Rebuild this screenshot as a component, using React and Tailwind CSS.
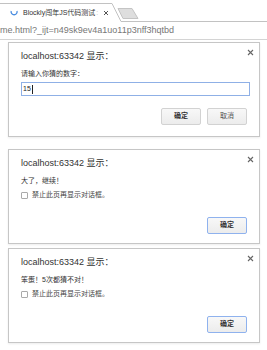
import React from "react";

const font = { fontFamily: '"Liberation Sans", "Noto Sans CJK SC", sans-serif' };

const Close = () => (
  <svg width="7" height="7" viewBox="0 0 7 7" className="absolute right-[5px] top-[6px]">
    <path d="M1 1 L6 6 M6 1 L1 6" stroke="#666" strokeWidth="1.1" />
  </svg>
);

const Button = ({ children, focused, muted }) => (
  <div
    className={`flex h-[17px] w-[40px] items-center justify-center rounded-[2px] border bg-gradient-to-b from-[#f8f8f8] to-[#ececec] text-[7px] ${
      focused ? "border-[#8fb2ee]" : "border-[#d2d2d2]"
    } ${muted ? "text-[#555]" : "font-bold text-[#333]"}`}
  >
    {children}
  </div>
);

const Dialog = ({ message, prompt, className = "" }) => (
  <div className={`relative mx-[8px] h-[95px] w-[252px] border border-[#c6c6c6] bg-white pl-[12px] pr-[11px] shadow-[0_1px_2px_rgba(0,0,0,0.08)] ${className}`}>
    <Close />
    <div className="pt-[8px] text-[9px] leading-[10px] text-[#333]">localhost:63342 显示：</div>
    <div className="mt-[8px] text-[7px] leading-[9px] text-[#333]">{message}</div>
    {prompt ? (
      <>
        <div className="mt-[4px] flex h-[14px] w-[229px] items-center border border-[#8fb0e6] pl-[1px] text-[7px] text-[#222]">
          15<span className="ml-[1px] h-[9px] w-px bg-[#222]" />
        </div>
        <div className="mt-[12px] flex justify-end gap-[6px] pr-[1px]">
          <Button>确定</Button>
          <Button muted>取消</Button>
        </div>
      </>
    ) : (
      <>
        <div className="mt-[6px] flex h-[9px] items-center gap-[4px] text-[7px] text-[#444]">
          <span className="h-[7px] w-[7px] rounded-[1px] border border-[#aaa] bg-white" />
          禁止此页再显示对话框。
        </div>
        <div className="mt-[17px] flex justify-end pr-[1px]">
          <Button focused>确定</Button>
        </div>
      </>
    )}
  </div>
);

export default function App() {
  return (
    <div className="h-[350px] w-[267px] overflow-hidden bg-white" style={font}>
      <div className="relative h-[22px]">
        <svg width="267" height="22" className="absolute left-0 top-0">
          <path d="M-1 3.5 L112 3.5 L121 21.5 L267 21.5" fill="white" stroke="#c2c2c2" />
          <path d="M118 8.5 L132 8.5 L138 18.5 L123 18.5 Z" fill="#dedede" stroke="#c4c4c4" />
          <path d="M11.2 11 A3 3 0 1 0 17 11" fill="none" stroke="#4a8de0" strokeWidth="1.3" />
          <path d="M104 11 L108 15 M108 11 L104 15" stroke="#555" strokeWidth="1" />
        </svg>
        <div className="absolute left-[23px] top-[8px] flex w-[76px] items-center overflow-hidden whitespace-nowrap text-[7px] leading-[10px] text-[#333]">
          Blockly闯年JS代码测试
          <span className="ml-[1px] text-[#bbb]">:</span>
        </div>
      </div>
      <div className="flex h-[18px] items-center border-b border-[#d4d4d4] text-[9px] text-[#777]">
        me.html?_ijt=n49sk9ev4a1uo11p3nff3hqtbd
      </div>
      <Dialog className="mt-[2px]" message="请输入你猜的数字：" prompt />
      <Dialog className="mt-[12px]" message="大了，继续！" />
      <Dialog className="mt-[4px]" message="笨蛋！5次都猜不对！" />
    </div>
  );
}
